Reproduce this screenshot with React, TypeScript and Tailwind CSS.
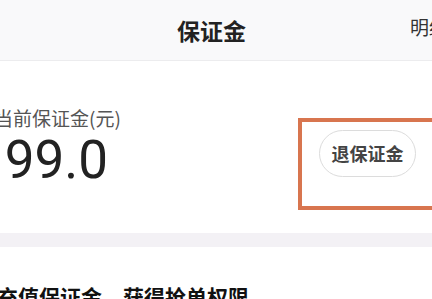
import React from "react";

const cjk = "font-['Noto_Sans_CJK_SC','Noto_Sans',sans-serif]";

export default function App() {
  return (
    <div className={`w-[432px] h-[299px] overflow-hidden bg-white ${cjk}`}>
      {/* 顶部导航 */}
      <div className="h-[61px] bg-[#f9f9fa] border-b border-[#ececee] flex items-center whitespace-nowrap">
        <div className="pl-[177px] text-[23px] leading-[30px] font-bold text-[#222]">
          保证金
        </div>
        <div className="ml-[164px] text-[19px] leading-[26px] text-[#333] -mt-[6px]">
          明细
        </div>
      </div>

      {/* 当前保证金 */}
      <div className="h-[172px] flex items-start -ml-[6px] overflow-hidden">
        <div className="w-[304px] shrink-0 pt-[44px]">
          <div className="text-[19px] leading-[26px] text-[#555]">当前保证金(元)</div>
          <div className="mt-[3px] -ml-[19px] font-['Roboto',sans-serif] text-[53px] leading-[52px] text-[#222]">
            199.0
          </div>
        </div>
        <div className="shrink-0 w-[160px] h-[92px] mt-[57px] border-[4px] border-[#d8754f] pl-[17px] pt-[8px]">
          <button className="h-[47px] w-[97px] rounded-full border border-[#dcdcdc] bg-white text-[18px] font-bold text-[#444] flex items-center justify-center">
            退保证金
          </button>
        </div>
      </div>

      <div className="h-[14px] bg-[#f3f1f5]" />

      <div className="pt-[35px] -ml-[3px] whitespace-nowrap text-[21px] leading-[28px] font-bold text-[#111]">
        充值保证金，获得抢单权限
      </div>
    </div>
  );
}
